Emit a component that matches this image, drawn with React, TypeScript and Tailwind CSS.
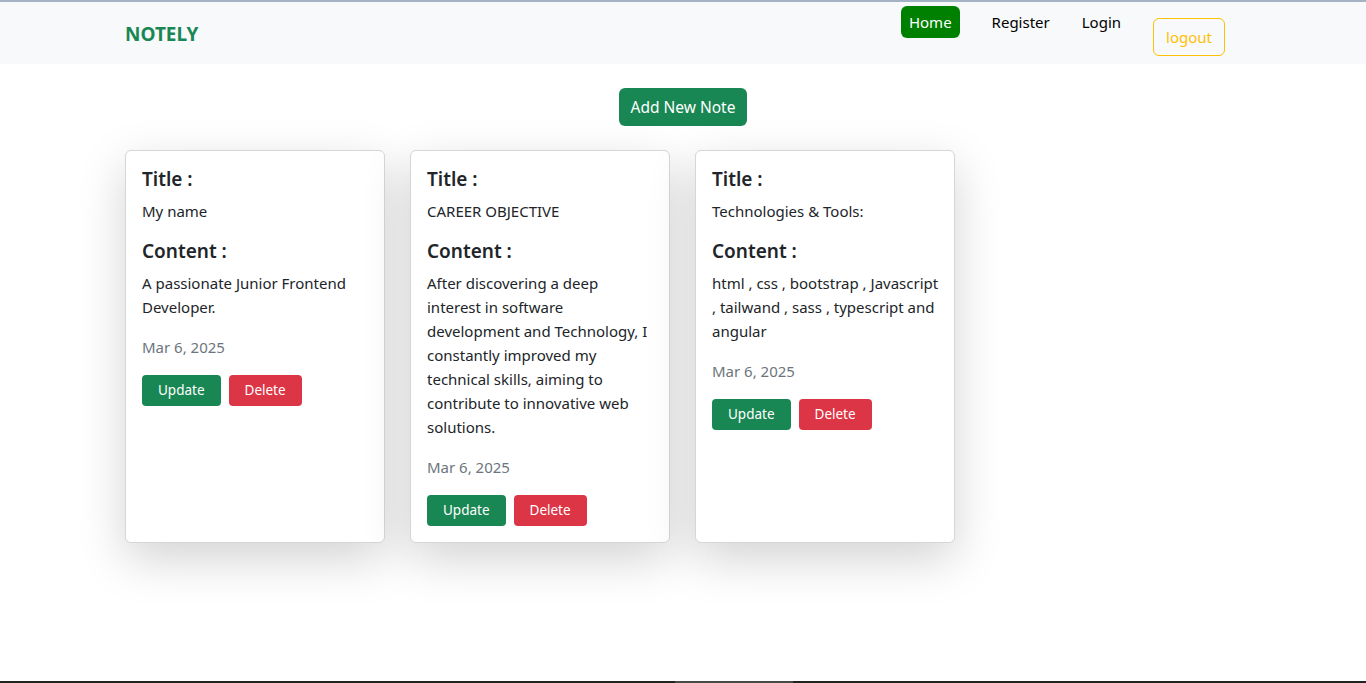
import React from "react";

interface Note {
  title: string;
  content: string;
  date: string;
}

const notes: Note[] = [
  {
    title: "My name",
    content: "A passionate Junior Frontend Developer.",
    date: "Mar 6, 2025",
  },
  {
    title: "CAREER OBJECTIVE",
    content:
      "After discovering a deep interest in software development and Technology, I constantly improved my technical skills, aiming to contribute to innovative web solutions.",
    date: "Mar 6, 2025",
  },
  {
    title: "Technologies & Tools:",
    content:
      "html , css , bootstrap , Javascript , tailwand , sass , typescript and angular",
    date: "Mar 6, 2025",
  },
];

const NoteCard: React.FC<{ note: Note }> = ({ note }) => (
  <div className="w-[260px] rounded-[6px] border border-[#d6d6d6] bg-white py-4 pl-4 pr-[15px] text-[#212529] shadow-[0_1rem_3rem_rgba(0,0,0,0.175)]">
    <h5 className="mb-2 text-[19px] leading-[24px] font-semibold">Title :</h5>
    <p className="mb-4 text-[15px] leading-[24px]">{note.title}</p>
    <h5 className="mb-2 text-[19px] leading-[24px] font-semibold">Content :</h5>
    <p className="mb-4 text-[15px] leading-[24px]">{note.content}</p>
    <p className="mb-4 text-[15px] leading-[24px] text-[#6c757d]">{note.date}</p>
    <div className="flex gap-2">
      <button className="rounded-[4px] bg-[#198754] px-4 py-[5px] text-[13.5px] leading-[21px] text-white">
        Update
      </button>
      <button className="rounded-[4px] bg-[#dc3545] px-4 py-[5px] text-[13.5px] leading-[21px] text-white">
        Delete
      </button>
    </div>
  </div>
);

export default function App() {
  return (
    <div
      className="flex h-[683px] flex-col bg-white"
      style={{ fontFamily: '"Noto Sans", "Open Sans", sans-serif' }}
    >
      {/* navbar */}
      <header className="h-[64px] border-t-2 border-[#a3b3c3] bg-[#f8f9fa]">
        <div className="mx-auto flex h-full w-[1140px] items-start px-3">
          <span className="mt-[20px] text-[19px] leading-[24px] font-bold text-[#198754]">
            NOTELY
          </span>
          <nav className="ml-auto mr-4 flex items-start gap-8 pt-[4px] text-[15px] leading-[24px]">
            <a className="rounded-[6px] bg-[#008000] px-2 py-[4px] text-white">Home</a>
            <a className="py-[4px] text-black">Register</a>
            <a className="py-[4px] text-black">Login</a>
            <button className="mt-[12px] rounded-[6px] border border-[#ffc107] px-3 py-[6px] text-[#ffc107]">
              logout
            </button>
          </nav>
        </div>
      </header>

      <main className="flex-1">
        <div className="mt-[24px] flex justify-center">
          <button className="rounded-[6px] bg-[#198754] px-3 py-[7px] text-[15.5px] leading-[24px] text-white">
            Add New Note
          </button>
        </div>
        <div className="mx-auto mt-[24px] flex w-[1140px] items-stretch gap-[25px] px-3">
          {notes.map((n, i) => (
            <NoteCard key={i} note={n} />
          ))}
        </div>
      </main>

      <div className="flex h-[2px] bg-[#222]">
        <div className="ml-[675px] w-[118px] bg-[#4a4a4a]" />
      </div>
    </div>
  );
}
